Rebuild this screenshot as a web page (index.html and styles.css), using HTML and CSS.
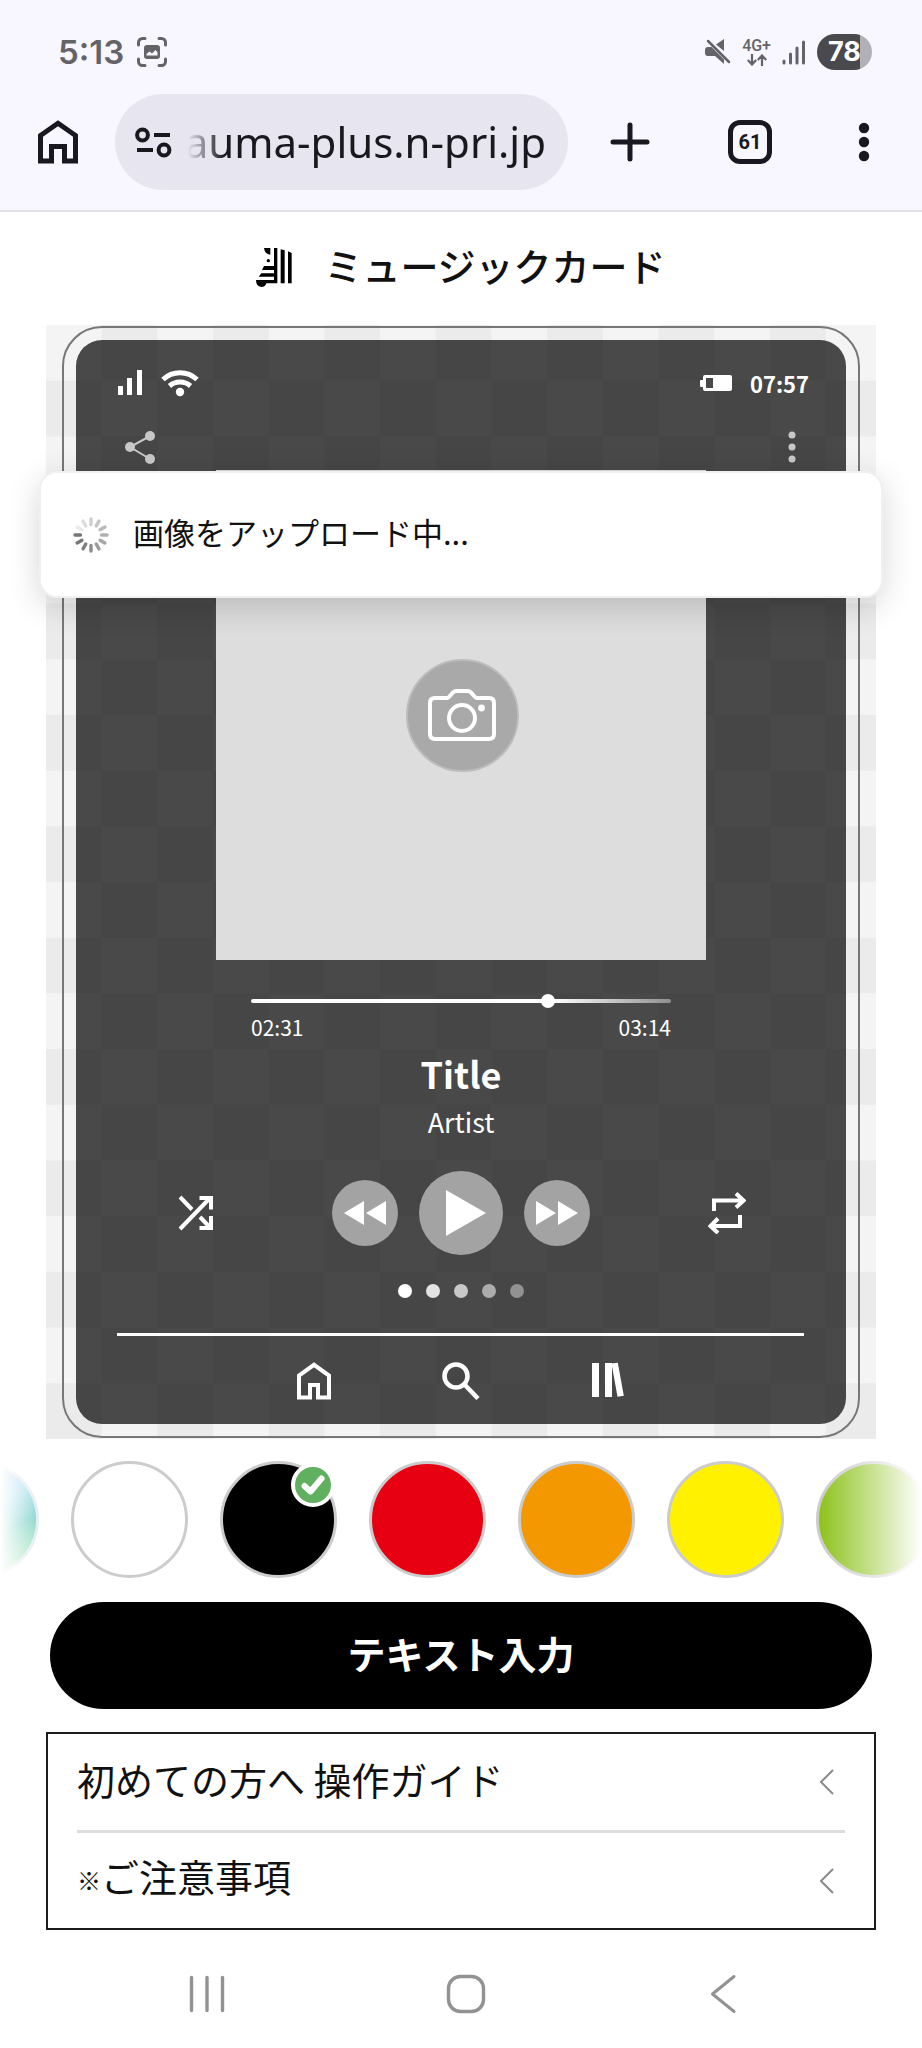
FILE: index.html
```html
<!DOCTYPE html>
<html lang="ja">
<head>
<meta charset="utf-8">
<meta name="viewport" content="width=device-width, initial-scale=1">
<title>ミュージックカード</title>
<link rel="stylesheet" href="styles.css">
</head>
<body>
<header class="browser">
  <div class="status">
    <span class="status-time">5:13</span>
    <svg class="status-shot" width="30" height="30" viewBox="0 0 30 30" fill="none" stroke="#646368" stroke-width="3" stroke-linecap="round">
      <path d="M1.500 8V5.500a4 4 0 0 1 4-4H8M22 1.500h2.500a4 4 0 0 1 4 4V8M28.500 22v2.500a4 4 0 0 1-4 4H22M8 28.500H5.500a4 4 0 0 1-4-4V22"/>
      <rect x="7" y="8" width="16" height="14" rx="3" fill="#646368" stroke="none"/>
      <path d="M9.500 18.500v-1.500l3-2.500 2.500 2 3.500-3.500 2 2.500v3z" fill="#f8f7ff" stroke="none"/>
    </svg>
    <div class="status-right">
      <svg width="26" height="26" viewBox="0 0 26 26" fill="#646368">
        <path d="M19 0v12L11 5.500zM0 11a3 3 0 0 1 3-3h3.500L19 20.500V25l-9-8H3a3 3 0 0 1-3-3z"/>
        <path d="M3 2l21 21" stroke="#646368" stroke-width="2.500" stroke-linecap="round"/>
      </svg>
      <div class="net">
        <span>4G+</span>
        <svg width="20" height="12" viewBox="0 0 20 12" fill="none" stroke="#646368" stroke-width="2.200"><path d="M5 0v10.500M.8 6L5 10.500 9.200 6M15 12V1.500M10.800 6L15 1.500 19.200 6"/></svg>
      </div>
      <svg width="24" height="25" viewBox="0 0 24 25" stroke="#646368" stroke-width="3" stroke-linecap="round"><path d="M2 21v2M8.500 14v9M15 8v15M21.500 2v21"/></svg>
      <span class="battery">78</span>
    </div>
  </div>
  <div class="toolbar">
    <button class="icon-btn home" aria-label="ホーム">
      <svg width="40" height="44" viewBox="0 0 40 44" fill="none" stroke="#19181f" stroke-width="5"><path d="M2.500 41V15.500L20 3.300l17.500 12.200V41h-11V26.500h-13V41z"/></svg>
    </button>
    <label class="omnibox">
      <svg width="37" height="31" viewBox="0 0 37 31" fill="none" stroke="#19181f" stroke-width="4"><circle cx="7.500" cy="8" r="5.400"/><circle cx="29" cy="23" r="5.400"/><path d="M19 8h16M2 23h16" /></svg>
      <input class="url" type="text" value="auma-plus.n-pri.jp" aria-label="アドレス">
    </label>
    <button class="icon-btn plus" aria-label="新しいタブ">
      <svg width="40" height="40" viewBox="0 0 40 40" stroke="#19181f" stroke-width="5" stroke-linecap="round"><path d="M20 3v34M3 20h34"/></svg>
    </button>
    <button class="icon-btn tabs" aria-label="タブ一覧">61</button>
    <button class="icon-btn more" aria-label="メニュー">
      <svg width="12" height="40" viewBox="0 0 12 40" fill="#19181f"><circle cx="6" cy="6" r="5.200"/><circle cx="6" cy="20" r="5.200"/><circle cx="6" cy="34" r="5.200"/></svg>
    </button>
  </div>
</header>

<main class="page">
  <h1 class="heading">
    <svg width="36" height="39" viewBox="0 0 108 117" fill="#000">
      <path d="M24 0h19v20Q26 18 24 0zM54 0h10v106H31Q28 117 16 117 0 115 0 96h54V86H8l8-10h38V66H18l6-12h30zM74 4l12 3v99H74zM96 10l11 5v91H96z"/>
      <circle cx="37" cy="38" r="5"/>
    </svg>
    <span class="label">ミュージックカード</span>
  </h1>

  <section class="canvas">
    <div class="case">
      <div class="screen">
        <div class="row phone-status">
          <div class="pair">
            <svg width="26" height="28" viewBox="0 0 26 28" fill="#fff"><path d="M1 17h5v9H1zM10 9h5v17h-5zM20 1h5v25h-5z"/></svg>
            <svg width="38" height="28" viewBox="0 0 38 28" fill="none" stroke="#fff" stroke-width="5"><path d="M2 10.500a25 25 0 0 1 34 0M8.500 17a16 16 0 0 1 21 0"/><circle cx="19" cy="23" r="4.200" fill="#fff" stroke="none"/></svg>
          </div>
          <div class="pair clock">
            <svg width="32" height="16" viewBox="0 0 32 16" fill="#fff" fill-rule="evenodd"><path d="M5 0h25a2 2 0 0 1 2 2v12a2 2 0 0 1-2 2H5a2 2 0 0 1-2-2v-2H1a1 1 0 0 1-1-1V6a1 1 0 0 1 1-1h2V2a2 2 0 0 1 2-2zM6 3v10h7V3z"/></svg>
            <span>07:57</span>
          </div>
        </div>
        <div class="row tools">
          <svg width="30" height="34" viewBox="0 0 30 34" fill="#c8c8c8" stroke="#c8c8c8" stroke-width="2"><path d="M25 6L5 17l20 12" fill="none"/><g stroke="none"><circle cx="25" cy="6" r="5"/><circle cx="5" cy="17" r="5"/><circle cx="25" cy="29" r="5"/></g></svg>
          <svg width="8" height="34" viewBox="0 0 8 34" fill="#c8c8c8"><circle cx="4" cy="5" r="3.500"/><circle cx="4" cy="17" r="3.500"/><circle cx="4" cy="29" r="3.500"/></svg>
        </div>
        <div class="artwork">
          <button class="camera" aria-label="画像を選択">
            <svg width="68" height="52" viewBox="0 0 68 52" fill="none" stroke="#fff" stroke-width="4"><path d="M7 9h12c3 0 5-7 9-7h12c4 0 6 7 9 7h12q5 0 5 5v31q0 5-5 5H7q-5 0-5-5V14q0-5 5-5z"/><circle cx="34" cy="29" r="13"/><circle cx="53.500" cy="19" r="3.400" fill="#fff" stroke="none"/></svg>
          </button>
        </div>
        <div class="player">
          <div class="progress"><span class="knob"></span></div>
          <div class="times"><span>02:31</span><span>03:14</span></div>
        </div>
        <p class="song">Title</p>
        <p class="artist">Artist</p>
        <div class="controls">
          <svg width="36" height="36" viewBox="0 0 36 36" fill="none" stroke="#fff" stroke-width="4"><path d="M2 34L32 3M2 2l12 12.500M21.500 3H33v11.500M22 22l10 10.500M33 21v12H21.500"/></svg>
          <div class="discs">
            <span class="disc"><svg width="42" height="24" viewBox="0 0 42 24" fill="#fff"><path d="M20 0v24L0 12zM42 0v24L22 12z"/></svg></span>
            <span class="disc disc-play"><svg width="40" height="46" viewBox="0 0 40 46" fill="#fff"><path d="M0 0l40 23L0 46z"/></svg></span>
            <span class="disc"><svg width="42" height="24" viewBox="0 0 42 24" fill="#fff"><path d="M0 0v24l20-12zM22 0v24l20-12z"/></svg></span>
          </div>
          <svg width="38" height="42" viewBox="0 0 38 42" fill="none" stroke="#fff" stroke-width="4"><path d="M6 19V8.500h29M28 1.500l7.500 7-7.500 7M32 23v11H3M10 26.500L2.500 34l7.500 7"/></svg>
        </div>
        <div class="dots"><i></i><i></i><i></i><i></i><i></i></div>
        <div class="bottom">
          <svg width="36" height="38" viewBox="0 0 36 38" fill="none" stroke="#fff" stroke-width="4"><path d="M3 35.500V13.500L18 2.800l15 10.700v22H22V23h-8v12.500z"/></svg>
          <svg width="38" height="38" viewBox="0 0 38 38" fill="none" stroke="#fff" stroke-width="4.500"><circle cx="14" cy="14" r="11.500"/><path d="M22 22l14 14.500"/></svg>
          <svg width="32" height="36" viewBox="0 0 32 36" fill="#fff"><path d="M0 1h7v34H0zM13 1h7v34h-7z"/><path d="M19.500 1.500l6.300-.8 6 33-6.300 1.100z"/></svg>
        </div>
      </div>
    </div>
    <div class="toast" role="status">
      <svg width="36" height="36" viewBox="-18 -18 36 36" stroke-width="3.400" stroke-linecap="round">
        <path d="M-10.500 0H-16" stroke="#777"/>
        <path d="M-10.500 0H-16" stroke="#777" transform="rotate(-30)"/>
        <path d="M-10.500 0H-16" stroke="#808080" transform="rotate(-60)"/>
        <path d="M-10.500 0H-16" stroke="#8c8c8c" transform="rotate(-90)"/>
        <path d="M-10.500 0H-16" stroke="#9c9c9c" transform="rotate(-120)"/>
        <path d="M-10.500 0H-16" stroke="#a6a6a6" transform="rotate(-150)"/>
        <path d="M-10.500 0H-16" stroke="#b0b0b0" transform="rotate(-180)"/>
        <path d="M-10.500 0H-16" stroke="#bababa" transform="rotate(-210)"/>
        <path d="M-10.500 0H-16" stroke="#c4c4c4" transform="rotate(-240)"/>
        <path d="M-10.500 0H-16" stroke="#cecece" transform="rotate(-270)"/>
        <path d="M-10.500 0H-16" stroke="#dcdcdc" transform="rotate(-300)"/>
        <path d="M-10.500 0H-16" stroke="#ebebeb" transform="rotate(-330)"/>
      </svg>
      <span class="label">画像をアップロード中...</span>
    </div>
  </section>

  <div class="swatches">
    <button class="swatch aurora" aria-label="オーロラ"></button>
    <button class="swatch white" aria-label="白"></button>
    <button class="swatch black" aria-label="黒">
      <span class="badge"><svg width="24" height="20" viewBox="0 0 24 20" fill="none" stroke="#fff" stroke-width="6" stroke-linecap="round" stroke-linejoin="round"><path d="M3.500 11l6 5.500L20.500 3.500"/></svg></span>
    </button>
    <button class="swatch red" aria-label="赤"></button>
    <button class="swatch orange" aria-label="オレンジ"></button>
    <button class="swatch yellow" aria-label="黄"></button>
    <button class="swatch green" aria-label="緑"></button>
  </div>

  <button class="text-btn">テキスト入力</button>

  <div class="accordion">
    <button class="acc-row"><span class="label">初めての方へ 操作ガイド</span>
      <svg width="15" height="26" viewBox="0 0 15 26" fill="none" stroke="#8a8a8a" stroke-width="2"><path d="M14 1L2 13l12 12"/></svg></button>
    <button class="acc-row"><span class="label"><span class="mark">※</span>ご注意事項</span>
      <svg width="15" height="26" viewBox="0 0 15 26" fill="none" stroke="#8a8a8a" stroke-width="2"><path d="M14 1L2 13l12 12"/></svg></button>
  </div>
</main>

<nav class="sysnav">
  <button class="icon-btn" aria-label="最近"><svg width="40" height="40" viewBox="0 0 40 40" stroke="#929292" stroke-width="3.400" stroke-linecap="round"><path d="M4.500 3.500v33M20 3.500v33M35.500 3.500v33"/></svg></button>
  <button class="icon-btn" aria-label="ホーム"><svg width="40" height="40" viewBox="0 0 40 40" fill="none" stroke="#929292" stroke-width="3.400"><rect x="2.500" y="2.500" width="35" height="35" rx="12"/></svg></button>
  <button class="icon-btn" aria-label="戻る"><svg width="40" height="40" viewBox="0 0 40 40" fill="none" stroke="#929292" stroke-width="3" stroke-linecap="round" stroke-linejoin="round"><path d="M30 2.500L8.500 20 30 37.500"/></svg></button>
</nav>
</body>
</html>
```
FILE: styles.css
```css
* { box-sizing: border-box; }

body {
  margin: 0;
  background: #fff;
  color: #111;
  font-family: "Noto Sans CJK JP", "Liberation Sans", sans-serif;
}

button, input {
  margin: 0;
  padding: 0;
  border: 0;
  background: none;
  color: inherit;
  font: inherit;
}

svg { display: block; flex: none; }

/* Lifts Japanese labels to the optical centre of their row */
.label { padding-bottom: 6px; }

/* Browser chrome */
.browser {
  padding-top: 30px;
  background: #f8f7ff;
  border-bottom: 2px solid #e2e1e8;
}

.status {
  display: flex;
  align-items: center;
  height: 44px;
  padding: 0 50px 0 58px;
  color: #646368;
}

.status-time { font: 600 33px/44px Inter, sans-serif; }
.status-shot { margin-left: 13px; }

.status-right {
  display: flex;
  align-items: center;
  gap: 11px;
  margin-left: auto;
}

.net {
  display: flex;
  flex-direction: column;
  align-items: center;
  gap: 1px;
  font: 500 16px/15px Roboto, sans-serif;
}

.battery {
  width: 55px;
  border-radius: 18px;
  background: linear-gradient(90deg, #4a494d 78%, #b1b0b6 0);
  color: #fff;
  font: 700 27px/36px Inter, sans-serif;
  text-align: center;
}

.toolbar {
  display: flex;
  align-items: center;
  height: 136px;
  padding: 0 52px 0 38px;
}

.icon-btn { display: grid; place-items: center; cursor: pointer; }
.home { margin-right: 37px; }
.plus { margin: 0 78px 0 42px; }
.more { margin-left: 86px; }

.omnibox {
  display: flex;
  flex: 1;
  align-items: center;
  min-width: 0;
  height: 96px;
  padding: 0 22px 0 20px;
  border-radius: 48px;
  background: #e7e5f0;
}

.url {
  flex: 1;
  min-width: 0;
  height: 64px;
  outline: 0;
  color: #19181f;
  font: 400 42px/64px "Noto Sans", sans-serif;
  text-align: right;
  -webkit-mask-image: linear-gradient(90deg, transparent 16px, #000 52px);
  mask-image: linear-gradient(90deg, transparent 16px, #000 52px);
}

.tabs {
  width: 44px;
  height: 44px;
  border: 5px solid #19181f;
  border-radius: 12px;
  color: #19181f;
  font: 700 20px/32px Roboto, sans-serif;
}

/* Heading */
.heading {
  display: flex;
  align-items: center;
  justify-content: center;
  gap: 32px;
  height: 113px;
  margin: 0;
  padding-bottom: 2px;
  font-size: 38px;
  font-weight: 500;
  line-height: 56px;
}

/* Card preview */
.canvas {
  position: relative;
  margin: 0 46px;
  padding: 1px 16px;
  background: repeating-conic-gradient(#ebebeb 0 25%, #f4f4f4 0 50%) 0 0 / 13.42% 10%;
}

.case {
  padding: 12px;
  border: 2px solid #777;
  border-radius: 40px;
}

.screen {
  display: flex;
  flex-direction: column;
  padding: 29px 0 24px;
  border-radius: 26px;
  background: rgba(0, 0, 0, .7);
  color: #fff;
}

.row { display: flex; align-items: center; justify-content: space-between; }
.phone-status { height: 28px; padding: 0 37px 0 41px; }
.pair { display: flex; align-items: center; gap: 18px; }
.clock { font-size: 22px; font-weight: 700; line-height: 28px; }
.tools { margin: 33px 50px 6px 49px; }

.artwork {
  display: grid;
  place-items: center;
  width: calc(100% - 280px);
  aspect-ratio: 1;
  margin: 0 auto;
  padding-left: 2px;
  background: #ddd;
}

.camera {
  display: grid;
  place-items: center;
  width: 113px;
  height: 113px;
  border: 2px solid #bcbcbc;
  border-radius: 50%;
  background: #a9a9a9;
}

.player { width: 420px; margin: 39px auto 0; }

.progress {
  position: relative;
  height: 4px;
  border-radius: 2px;
  background: linear-gradient(90deg, #fff 72%, #8f8f8f);
}

.knob {
  position: absolute;
  top: -5px;
  left: 69%;
  width: 14px;
  height: 14px;
  border-radius: 50%;
  background: #fff;
}

.times {
  display: flex;
  justify-content: space-between;
  margin-top: 12px;
  font-size: 21px;
  line-height: 24px;
}

.song, .artist { margin: 0; text-align: center; }
.song { margin-top: 14px; font-size: 36px; font-weight: 700; line-height: 40px; }
.artist { margin-top: 11px; font-size: 27px; font-weight: 400; line-height: 36px; }

.controls {
  display: flex;
  align-items: center;
  justify-content: space-between;
  margin: 31px 100px 0 102px;
}

.discs { display: flex; align-items: center; gap: 21px; }

.disc {
  display: grid;
  place-items: center;
  width: 66px;
  height: 66px;
  border-radius: 50%;
  background: #a3a3a3;
}

.disc-play { width: 84px; height: 84px; padding-left: 10px; }

.dots { display: flex; justify-content: center; gap: 14px; margin-top: 29px; }
.dots i { width: 14px; height: 14px; border-radius: 50%; background: #fff; }
.dots i:nth-child(2) { background: #e3e3e3; }
.dots i:nth-child(3) { background: #c8c8c8; }
.dots i:nth-child(4) { background: #acacac; }
.dots i:nth-child(5) { background: #929292; }

.bottom {
  display: grid;
  grid-template-columns: repeat(3, 147px);
  justify-content: center;
  justify-items: center;
  margin: 35px 42px 0 41px;
  padding-top: 26px;
  border-top: 3px solid #fff;
}

.toast {
  position: absolute;
  top: 146px;
  left: -7px;
  right: -7px;
  display: flex;
  align-items: center;
  gap: 24px;
  height: 127px;
  padding: 0 32px;
  border: 2px solid #f0f0f0;
  border-radius: 18px;
  background: #fff;
  box-shadow: 0 8px 32px rgba(0, 0, 0, .16);
  color: #111;
  font-size: 31px;
  line-height: 44px;
}

/* Colour picker */
.swatches {
  display: flex;
  gap: 32px;
  padding: 22px 0 24px;
  overflow: hidden;
  -webkit-mask-image: linear-gradient(90deg, transparent, #000 4%, #000 89%, transparent);
  mask-image: linear-gradient(90deg, transparent, #000 4%, #000 89%, transparent);
}

.swatch {
  position: relative;
  flex: none;
  width: 117px;
  height: 117px;
  border: 3px solid #ccc;
  border-radius: 50%;
}

.swatch:first-child { margin-left: -78px; }
.aurora { border-color: #e4eef0; background: linear-gradient(160deg, #dcd3f5, #b9e4f2 40%, #8fd8cf 62%, #c9efcb 90%); }
.black { background: #000; }
.red { background: #e60012; }
.orange { background: #f39800; }
.yellow { background: #fff100; }
.green { background: #8fc31f; }

.badge {
  position: absolute;
  top: -1px;
  right: -1px;
  display: grid;
  place-items: center;
  width: 44px;
  height: 44px;
  border: 4px solid #fff;
  border-radius: 50%;
  background: #60b060;
}

.text-btn {
  display: block;
  width: calc(100% - 100px);
  height: 107px;
  margin: 0 auto 23px;
  padding-bottom: 6px;
  border-radius: 54px;
  background: #000;
  color: #fff;
  font-size: 38px;
  font-weight: 700;
  line-height: 56px;
}

.accordion {
  margin: 0 46px;
  padding: 0 29px;
  border: 2px solid #1c1c1c;
}

.acc-row {
  display: flex;
  align-items: center;
  justify-content: space-between;
  width: 100%;
  height: 96px;
  padding-right: 11px;
  font-size: 38px;
  font-weight: 400;
  line-height: 56px;
  text-align: left;
}

.acc-row + .acc-row { height: 98px; border-top: 3px solid #ddd; }
.mark { font-size: 24px; font-weight: 700; vertical-align: 2px; }

/* System navigation */
.sysnav {
  display: flex;
  justify-content: space-between;
  padding: 44px 178px 34px 187px;
}
```
